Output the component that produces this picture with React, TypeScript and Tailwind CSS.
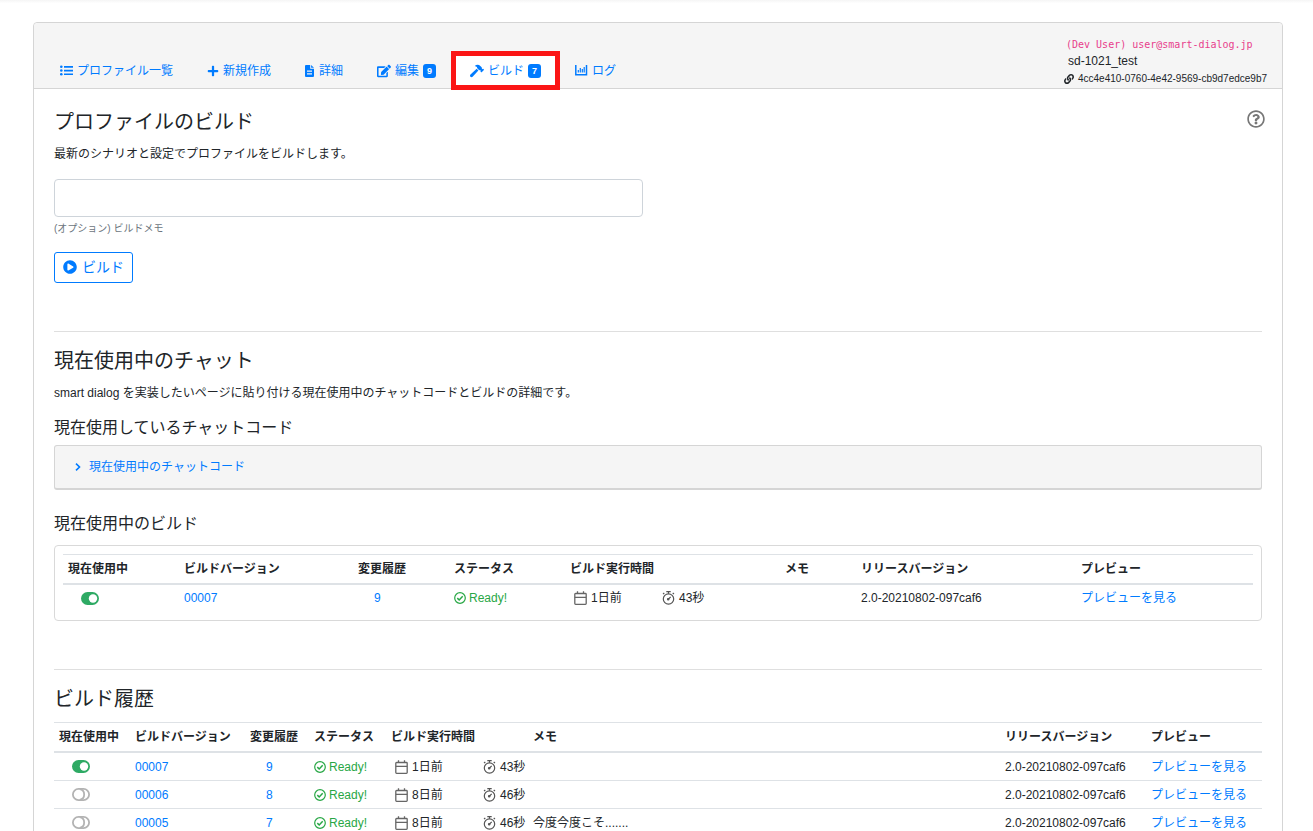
import type { ReactNode } from "react";
import {
  FaEdit,
  FaHammer,
  FaLink,
  FaPlayCircle,
  FaPlus,
  FaRegQuestionCircle,
} from "react-icons/fa";

type Build = {
  active: boolean;
  version: string;
  changes: number;
  date: string;
  duration: string;
  memo: string;
  release: string;
};

const history: Build[] = [
  { active: true, version: "00007", changes: 9, date: "1日前", duration: "43秒", memo: "", release: "2.0-20210802-097caf6" },
  { active: false, version: "00006", changes: 8, date: "8日前", duration: "46秒", memo: "", release: "2.0-20210802-097caf6" },
  { active: false, version: "00005", changes: 7, date: "8日前", duration: "46秒", memo: "今度今度こそ.......", release: "2.0-20210802-097caf6" },
];

const columns = ["現在使用中", "ビルドバージョン", "変更履歴", "ステータス", "ビルド実行時間", "メモ", "リリースバージョン", "プレビュー"];

const currentWidths = ["w-[116px]", "w-[174px]", "w-[96px]", "w-[116px]", "w-[215px]", "w-[76px]", "w-[220px]", "w-[177px]"];
const historyWidths = ["w-[76px]", "w-[115px]", "w-[64px]", "w-[77px]", "w-[142px]", "", "w-[146px]", "w-[116px]"];

function ListIcon() {
  return (
    <svg viewBox="0 0 13 11" className="h-[11px] w-[13px]" fill="currentColor" aria-hidden="true">
      <path d="M4 1h9v1.700H4zM4 4.700h9v1.700H4zM4 8.400h9v1.700H4z" />
      <circle cx="1.300" cy="1.800" r="1.300" />
      <circle cx="1.300" cy="5.500" r="1.300" />
      <circle cx="1.300" cy="9.200" r="1.300" />
    </svg>
  );
}

function FileIcon() {
  return (
    <svg viewBox="0 0 10 12" className="h-3 w-[10px]" fill="currentColor" aria-hidden="true">
      <path fillRule="evenodd" d="M1 0h4.200v3.700h3.800V11a1 1 0 0 1-1 1H1a1 1 0 0 1-1-1V1a1 1 0 0 1 1-1zM2 5.500v1.200h5V5.500zM2 8.200v1.200h5V8.200z" />
      <path d="M6.100 0 9 2.800H6.100z" />
    </svg>
  );
}

function ChartIcon() {
  return (
    <svg viewBox="0 0 13 11" className="h-[11px] w-[13px]" fill="none" stroke="currentColor" aria-hidden="true">
      <path d="M.8 0v9.700h10.700V0" strokeWidth="1.500" />
      <path d="M3.300 7.500V5M5.300 7.500V3M7.300 7.500V4M9.200 7.500V2" strokeWidth="1.200" />
    </svg>
  );
}

function Toggle({ on }: { on: boolean }) {
  return on ? (
    <svg viewBox="0 0 18 13" className="h-[13px] w-[18px] text-[#2eaa64]" role="img" aria-label="使用中">
      <rect width="18" height="13" rx="6.500" fill="currentColor" />
      <circle cx="12" cy="6.500" r="4.200" fill="#fff" />
    </svg>
  ) : (
    <svg viewBox="0 0 18 13" className="h-[13px] w-[18px] text-[#b3b3b3]" role="img" aria-label="未使用">
      <rect x=".9" y=".9" width="16.200" height="11.200" rx="5.600" fill="#fff" stroke="currentColor" strokeWidth="1.800" />
      <path d="M7.800 1.200a5.400 5.400 0 0 1 0 10.600" fill="none" stroke="currentColor" strokeWidth="1.800" />
    </svg>
  );
}

function CheckIcon() {
  return (
    <svg viewBox="0 0 12 12" className="size-3" fill="none" stroke="currentColor" aria-hidden="true">
      <circle cx="6" cy="6" r="5.300" strokeWidth="1.200" />
      <path d="m3.300 6.100 1.900 1.900 3.500-3.700" strokeWidth="1.500" />
    </svg>
  );
}

function CalendarIcon() {
  return (
    <svg viewBox="0 0 13 14" className="h-[14px] w-[13px] text-[#666]" fill="none" stroke="currentColor" strokeWidth="1.300" aria-hidden="true">
      <rect x=".8" y="2.500" width="11.400" height="10.800" rx=".8" />
      <path d="M.8 6.300h11.400M3.500 .3v2.500M9.500 .3v2.500" />
    </svg>
  );
}

function StopwatchIcon() {
  return (
    <svg viewBox="0 0 13 14" className="h-[14px] w-[13px] text-[#555]" fill="none" stroke="currentColor" strokeWidth="1.200" aria-hidden="true">
      <circle cx="6.500" cy="8" r="5.200" />
      <path d="M4.300.7h4.400M6.500.7v2M1 2.900l1.300-1M12 2.900l-1.300-1M6 8.500l2.700-2.700" />
      <circle cx="6.200" cy="8.300" r=".7" fill="currentColor" />
    </svg>
  );
}

function ChevronIcon() {
  return (
    <svg viewBox="0 0 6 8" className="h-2 w-[6px]" fill="none" stroke="currentColor" strokeWidth="1.600" aria-hidden="true">
      <path d="m1 .7 3.500 3.300L1 7.300" />
    </svg>
  );
}

function Tab({ icon, label, count, active = false }: { icon: ReactNode; label: string; count?: number; active?: boolean }) {
  return (
    <a
      href="#"
      aria-current={active ? "page" : undefined}
      className={
        active
          ? "relative flex h-[35px] items-center gap-1 bg-white px-[17px] outline-5 -outline-offset-3 outline-[#fb1515]"
          : "flex h-[35px] items-center gap-1 px-[17px]"
      }
    >
      {icon}
      {label}
      {count !== undefined && (
        <span className="rounded-[3px] bg-[#007bff] px-1 text-[9px] leading-[14px] font-bold text-white">{count}</span>
      )}
    </a>
  );
}

function BuildTable({ rows, widths, lined }: { rows: Build[]; widths: string[]; lined: boolean }) {
  const cell = lined ? "h-7 border-b border-[#dee2e6] px-[5px]" : "h-[26px] px-[5px]";
  return (
    <table className="w-full table-fixed border-separate border-spacing-0 text-left whitespace-nowrap">
      <colgroup>
        {widths.map((width, i) => (
          <col key={i} className={width} />
        ))}
      </colgroup>
      <thead>
        <tr>
          {columns.map((name) => (
            <th key={name} scope="col" className="h-[31px] border-t border-b-2 border-[#dee2e6] px-[5px] font-bold">
              {name}
            </th>
          ))}
        </tr>
      </thead>
      <tbody>
        {rows.map((row) => (
          <tr key={row.version}>
            <td className={cell}>
              <span className="flex pl-[13px]">
                <Toggle on={row.active} />
              </span>
            </td>
            <td className={cell}>
              <a href="#" className="text-[#007bff]">{row.version}</a>
            </td>
            <td className={cell}>
              <a href="#" className="pl-4 text-[#007bff]">{row.changes}</a>
            </td>
            <td className={cell}>
              <span className="flex items-center gap-[3px] text-[#28a745]">
                <CheckIcon />
                Ready!
              </span>
            </td>
            <td className={cell}>
              <span className="flex items-center pl-1">
                <span className="flex w-[88px] shrink-0 items-center gap-1">
                  <CalendarIcon />
                  {row.date}
                </span>
                <span className="flex shrink-0 items-center gap-1">
                  <StopwatchIcon />
                  {row.duration}
                </span>
              </span>
            </td>
            <td className={cell}>{row.memo}</td>
            <td className={cell}>{row.release}</td>
            <td className={cell}>
              <a href="#" className="text-[#007bff]">プレビューを見る</a>
            </td>
          </tr>
        ))}
      </tbody>
    </table>
  );
}

function Title({ children }: { children: ReactNode }) {
  return <h2 className="text-xl leading-6">{children}</h2>;
}

export default function App() {
  return (
    <div className="h-screen overflow-hidden bg-white font-['Liberation_Sans','Noto_Sans_CJK_JP',sans-serif] text-xs leading-[18px] text-[#212529]" lang="ja">
      <div className="h-[22px] bg-linear-to-b from-[#f5f5f5] to-white to-15%" />
      <main className="mr-[30px] ml-[33px] rounded-t border border-[#d5d5d5] pb-10">
        <header className="flex h-[66px] items-end justify-between rounded-t border-b border-[#d5d5d5] bg-[#f5f5f5] pr-[10px] pl-[9px]">
          <nav className="flex text-[#007bff]">
            <Tab icon={<ListIcon />} label="プロファイル一覧" />
            <Tab icon={<FaPlus size={12} />} label="新規作成" />
            <Tab icon={<FileIcon />} label="詳細" />
            <Tab icon={<FaEdit size={14} />} label="編集" count={9} />
            <Tab icon={<FaHammer size={14} />} label="ビルド" count={7} active />
            <Tab icon={<ChartIcon />} label="ログ" />
          </nav>
          <div className="w-[208px] pb-px leading-[17px]">
            <p className="pl-[2px] font-['DejaVu_Sans_Mono',monospace] text-[10px] text-[#e83e8c]">(Dev User) user@smart-dialog.jp</p>
            <p className="pl-1">sd-1021_test</p>
            <p className="flex items-center gap-1 text-[10px]">
              <FaLink size={10} />
              4cc4e410-0760-4e42-9569-cb9d7edce9b7
            </p>
          </div>
        </header>

        <div className="px-5">
          <section className="pt-[21px] pb-12">
            <div className="flex h-6 items-start justify-between">
              <Title>プロファイルのビルド</Title>
              <button type="button" aria-label="ヘルプ" className="mr-[-3px] text-[#777]">
                <FaRegQuestionCircle size={18} />
              </button>
            </div>
            <p className="mt-2 leading-6">最新のシナリオと設定でプロファイルをビルドします。</p>
            <input id="memo" type="text" className="mt-[13px] block h-[38px] w-[589px] max-w-full rounded border border-[#ced4da] px-3" />
            <label htmlFor="memo" className="mt-1 block text-[10px] leading-[15px] text-[#6c757d]">
              (オプション) ビルドメモ
            </label>
            <button type="button" className="mt-4 flex h-[31px] items-center gap-[5px] rounded-[3px] border border-[#007bff] px-2 pb-px text-sm text-[#007bff]">
              <FaPlayCircle size={14} />
              ビルド
            </button>
          </section>

          <section className="border-t border-[#dfdfdf] pt-[17px] pb-12">
            <Title>現在使用中のチャット</Title>
            <p className="mt-2 leading-6">smart dialog を実装したいページに貼り付ける現在使用中のチャットコードとビルドの詳細です。</p>
            <h3 className="mt-[13px] text-base leading-5">現在使用しているチャットコード</h3>
            <div className="mt-[7px] flex h-[45px] items-center rounded-[3px] border border-b-2 border-[#d5d5d5] bg-[#f5f5f5] px-5">
              <button type="button" className="flex items-center gap-2 text-[#007bff]">
                <ChevronIcon />
                現在使用中のチャットコード
              </button>
            </div>
            <h3 className="mt-6 text-base leading-5">現在使用中のビルド</h3>
            <div className="mt-[11px] rounded border border-[#d9d9d9] px-2 pt-2 pb-[9px]">
              <BuildTable rows={history.slice(0, 1)} widths={currentWidths} lined={false} />
            </div>
          </section>

          <section className="border-t border-[#dfdfdf] pt-[17px]">
            <Title>ビルド履歴</Title>
            <div className="mt-[11px]">
              <BuildTable rows={history} widths={historyWidths} lined />
            </div>
          </section>
        </div>
      </main>
    </div>
  );
}
